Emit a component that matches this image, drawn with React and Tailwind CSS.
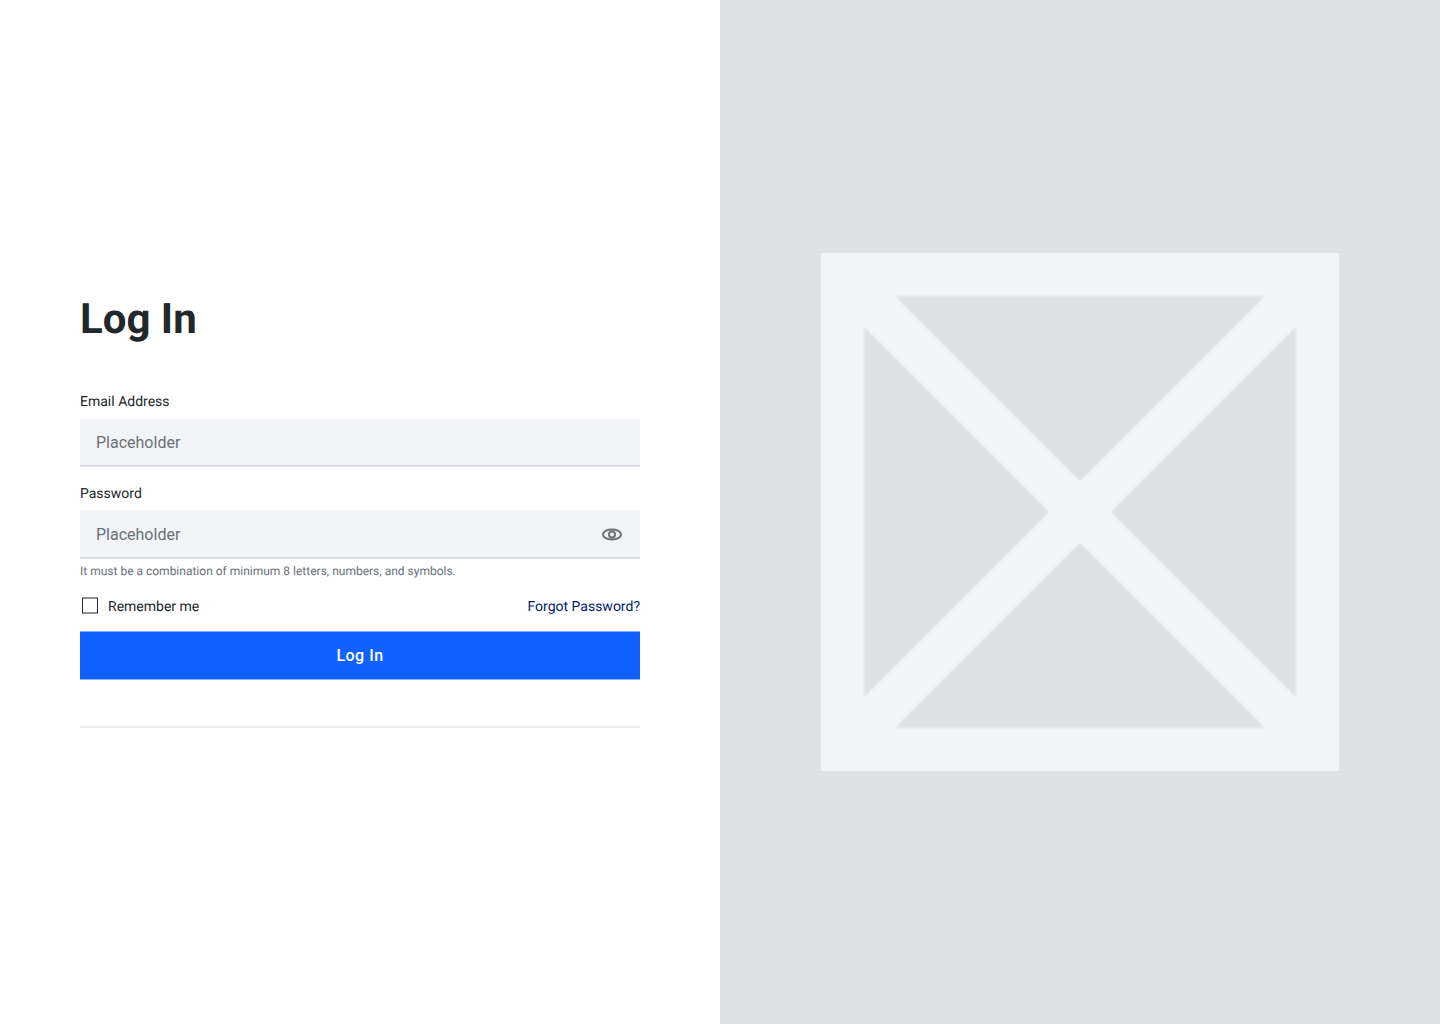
import React from 'react';

function EyeIcon() {
  return (
    <svg width="24" height="24" viewBox="0 -0.5 24 24" fill="none" stroke="#697077" strokeWidth="2">
      <path d="M3 12C3 9 7 7 12 7s9 2 9 5-4 5-9 5-9-2-9-5Z" />
      <circle cx="12" cy="12" r="3" />
    </svg>
  );
}

function Field({ label, type, id, children }) {
  return (
    <div className="flex flex-col gap-1.5">
      <label htmlFor={id} className="pt-px text-sm leading-5 text-[#21272a]">{label}</label>
      <div className="h-[49px] border-t border-b border-t-[#f9fafc] border-b-[#e0e3e6] bg-[#f2f4f8]">
        <div className="flex h-[47px] items-center gap-2 border-b border-[#dadde2] px-4">
          <input id={id} type={type} placeholder="Placeholder" className="min-w-0 flex-1 bg-transparent pt-0.5 text-base leading-[22px] text-[#21272a] outline-none placeholder:text-[#697077]" />
          {children}
        </div>
      </div>
    </div>
  );
}

export default function App() {
  return (
    <div className="grid h-screen grid-cols-2 bg-white font-[Roboto,sans-serif] [text-rendering:geometricPrecision]">
      <main className="flex flex-col px-20 pt-[297px]">
        <h1 className="mb-12 text-[42px] leading-[46px] font-bold text-[#21272a]">Log In</h1>
        <form className="flex flex-col">
          <Field id="email" label="Email Address" type="text" />
          <div className="mt-4 flex flex-col">
            <Field id="password" label="Password" type="text">
              <EyeIcon />
            </Field>
            <p className="mt-1 text-xs leading-[17px] text-[#697077]">It must be a combination of minimum 8 letters, numbers, and symbols.</p>
          </div>
          <div className="mt-4 mb-[15px] flex h-5 items-center justify-between text-sm leading-5">
            <label className="flex items-start gap-2 text-[#21272a]">
              <svg width="20" height="20" viewBox="0 0 20 20" fill="none" stroke="#21272a">
                <rect x="2.5" y="2" width="15" height="15" />
              </svg>
              <span className="mt-px -mb-px">Remember me</span>
            </label>
            <a href="#forgot" className="mt-px -mb-px text-[#001d6c]">Forgot Password?</a>
          </div>
          <button type="button" className="h-[49px] border-y border-[#87b0fe] bg-[#0f62fe] bg-clip-padding text-base font-medium tracking-[0.5px] text-white">Log In</button>
        </form>
        <hr className="mt-[46px] border-t-2 border-[#eeeff1]" />
      </main>
      <aside className="flex items-center justify-center bg-[#dde1e6]">
        <svg width="518" height="518" viewBox="0 0 518 518">
          <filter id="soft">
            <feGaussianBlur stdDeviation="0.8" />
          </filter>
          <path fill="#f2f4f8" d="M0 0h518v518H0z" />
          <path filter="url(#soft)" fill="#dde1e6" d="M74 43h370L259 228zM43 74l185 185L43 444zM475 74v370L290 259zM259 290l185 185H74z" />
        </svg>
      </aside>
    </div>
  );
}
